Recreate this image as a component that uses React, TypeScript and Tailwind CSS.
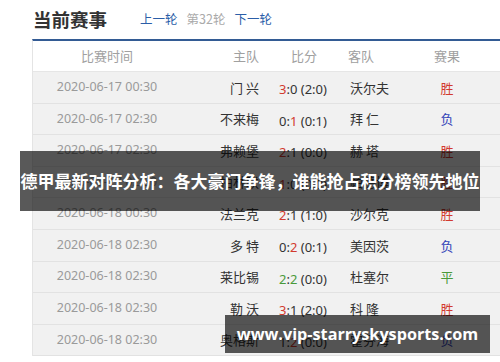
import React from "react";

type Row = {
  time: string;
  home: string;
  s: [string, string];
  win: 0 | 1 | 2 | 3;
  half: string;
  away: string;
  res: "胜" | "负" | "平";
};

const rows: Row[] = [
  { time: "2020-06-17 00:30", home: "门 兴", s: ["3", "0"], win: 1, half: "(2:0)", away: "沃尔夫", res: "胜" },
  { time: "2020-06-17 02:30", home: "不来梅", s: ["0", "1"], win: 2, half: "(0:1)", away: "拜 仁", res: "负" },
  { time: "2020-06-17 02:30", home: "弗赖堡", s: ["2", "1"], win: 1, half: "(0:0)", away: "赫 塔", res: "胜" },
  { time: "2020-06-17 02:30", home: "柏林联", s: ["1", "0"], win: 1, half: "(0:0)", away: "帕德博", res: "胜" },
  { time: "2020-06-18 00:30", home: "法兰克", s: ["2", "1"], win: 1, half: "(1:0)", away: "沙尔克", res: "胜" },
  { time: "2020-06-18 02:30", home: "多 特", s: ["0", "2"], win: 2, half: "(0:1)", away: "美因茨", res: "负" },
  { time: "2020-06-18 02:30", home: "莱比锡", s: ["2", "2"], win: 3, half: "(0:0)", away: "杜塞尔", res: "平" },
  { time: "2020-06-18 02:30", home: "勒 沃", s: ["3", "1"], win: 1, half: "(2:0)", away: "科 隆", res: "胜" },
  { time: "2020-06-18 02:30", home: "奥格斯", s: ["1", "2"], win: 2, half: "(0:0)", away: "霍芬海", res: "负" },
];

const CJK = { fontFamily: '"Noto Sans CJK SC", sans-serif' };
const NUM = { fontFamily: '"Noto Sans", "Noto Sans CJK SC", sans-serif' };

function Score({ r }: { r: Row }) {
  const a =
    r.win === 1 ? "text-[#d23a2f]" : r.win === 3 ? "text-[#4a9a3a]" : "text-[#333]";
  const b =
    r.win === 2 ? "text-[#d23a2f]" : r.win === 3 ? "text-[#4a9a3a]" : "text-[#333]";
  return (
    <span style={NUM} className="text-[13px] text-[#333]">
      <span className={a}>{r.s[0]}</span>:<span className={b}>{r.s[1]}</span> {r.half}
    </span>
  );
}

export default function App() {
  return (
    <div className="relative w-[500px] h-[362px] overflow-hidden bg-white" style={CJK}>
      <div className="flex items-center h-[39px] pl-[33px]">
        <span className="text-[18.5px] font-bold text-[#333]">当前赛事</span>
        <span className="ml-[33px] text-[12.5px] text-[#2b5ea8]">上一轮</span>
        <span className="ml-[9px] text-[12.5px] text-[#aaa]">第32轮</span>
        <span className="ml-[9px] text-[12.5px] text-[#2b5ea8]">下一轮</span>
      </div>

      <div className="ml-[32px] border-t-2 border-[#335b94] border-l border-l-[#e4e4e4]">
        <div className="flex items-center h-[31px] bg-white border-b border-[#e6e6e6] text-[13px] text-[#a0a0a0]">
          <div className="w-[148px] text-center">比赛时间</div>
          <div className="w-[78px] text-right">主队</div>
          <div className="w-[89px] pl-[32px]">比分</div>
          <div className="w-[73px]">客队</div>
          <div className="w-[52px] text-center">赛果</div>
        </div>
        {rows.map((r, i) => (
          <div
            key={i}
            className="flex items-center h-[31.6px] bg-[#f1f1f1] border-b border-[#e2e2e2]"
          >
            <div style={NUM} className="w-[148px] text-center text-[12.5px] text-[#9a9a9a]">
              {r.time}
            </div>
            <div className="w-[78px] text-right text-[13px] text-[#333] whitespace-pre">{r.home}</div>
            <div className="w-[89px] pl-[20px]">
              <Score r={r} />
            </div>
            <div className="w-[73px] pl-[2px] text-[13px] text-[#333] whitespace-pre">{r.away}</div>
            <div
              className={
                "w-[52px] text-center text-[13px] " +
                (r.res === "胜" ? "text-[#d23a2f]" : r.res === "负" ? "text-[#3344b8]" : "text-[#4a9a3a]")
              }
            >
              {r.res}
            </div>
          </div>
        ))}
      </div>

      <div className="absolute left-[20px] top-[151px] w-[460px] h-[60px] bg-black/65 flex items-center justify-center overflow-hidden">
        <span className="text-white font-bold text-[17px] whitespace-nowrap" style={CJK}>
          德甲最新对阵分析：各大豪门争锋，谁能抢占积分榜领先地位
        </span>
      </div>

      <div className="absolute left-[225px] top-[315px] w-[265px] h-[38px] bg-black/65 flex items-center justify-center">
        <span
          className="text-white font-bold text-[16.2px] whitespace-nowrap"
          style={{ fontFamily: '"Open Sans", sans-serif' }}
        >
          www.vip-starryskysports.com
        </span>
      </div>
    </div>
  );
}
